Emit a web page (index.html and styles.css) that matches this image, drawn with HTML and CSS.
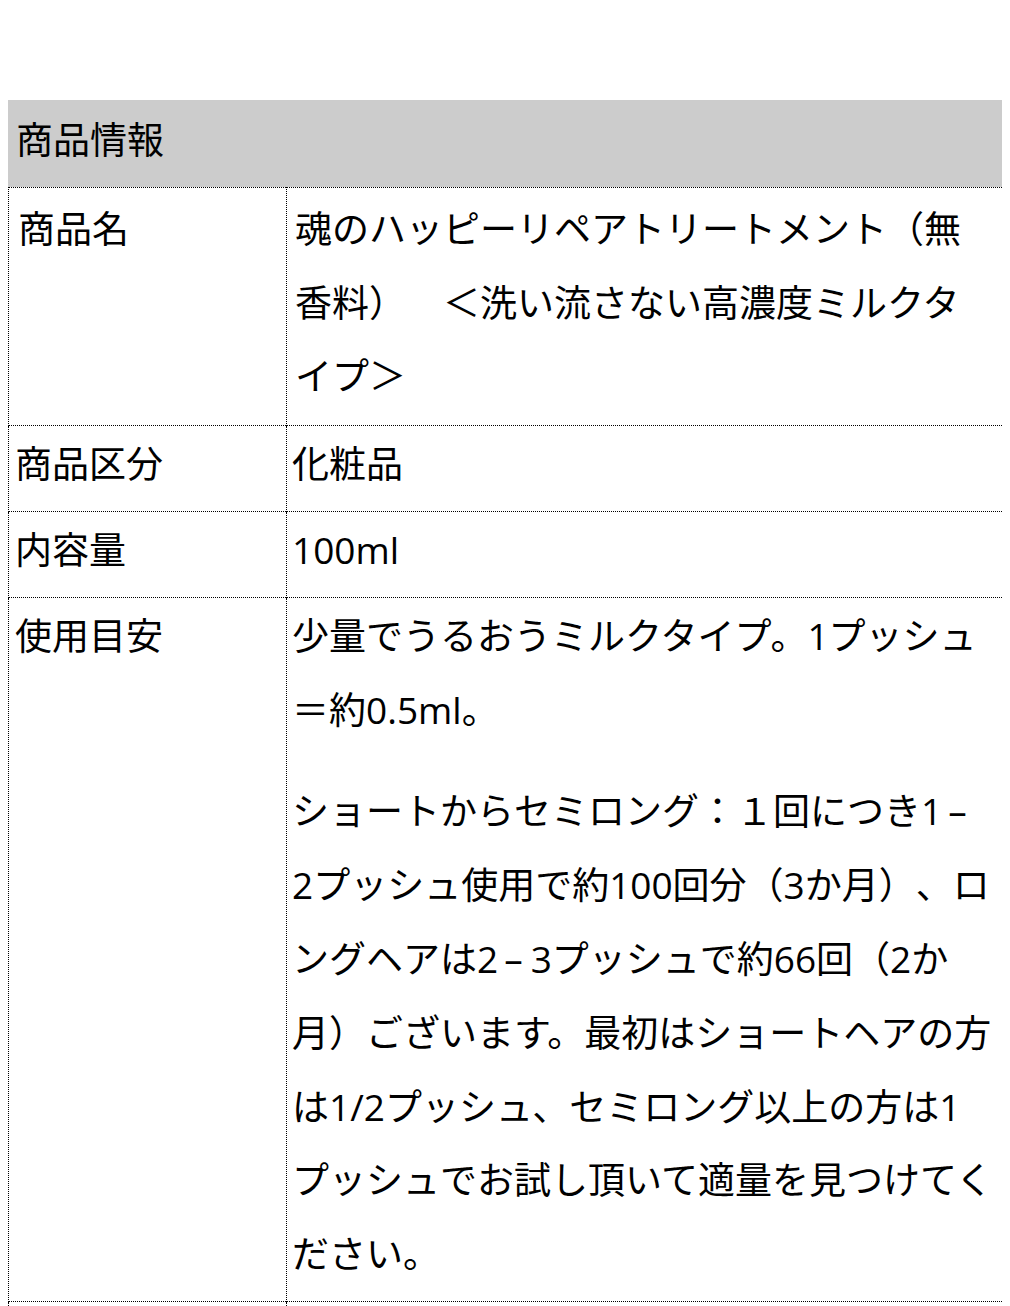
FILE: index.html
```
<!DOCTYPE html>
<html lang="ja">
<head>
<meta charset="utf-8">
<title>商品情報</title>
<link rel="stylesheet" href="styles.css">
</head>
<body>
<table class="spec">
  <colgroup>
    <col class="spec__label-col">
    <col class="spec__value-col">
  </colgroup>
  <thead>
    <tr>
      <th class="spec__title" colspan="2">商品情報</th>
    </tr>
  </thead>
  <tbody>
    <tr class="spec__row spec__row--roomy">
      <th class="spec__label">商品名</th>
      <td class="spec__value">魂のハッピーリペアトリートメント（無香料）　＜洗い流さない高濃度ミルクタイプ＞</td>
    </tr>
    <tr class="spec__row">
      <th class="spec__label">商品区分</th>
      <td class="spec__value">化粧品</td>
    </tr>
    <tr class="spec__row">
      <th class="spec__label">内容量</th>
      <td class="spec__value">100ml</td>
    </tr>
    <tr class="spec__row">
      <th class="spec__label">使用目安</th>
      <td class="spec__value">
        <p class="spec__note">少量でうるおうミルクタイプ。1プッシュ＝約0.5ml。</p>
        <p class="spec__note">ショートからセミロング：１回につき1<span class="spec__dash">–</span><br>2プッシュ使用で約100回分（3か月）、ロ<br>ングヘアは2<span class="spec__dash">–</span>3プッシュで約66回（2か<br>月）ございます。最初はショートヘアの方<br>は1/2プッシュ、セミロング以上の方は1<br>プッシュでお試し頂いて適量を見つけてく<br>ださい。</p>
      </td>
    </tr>
    <tr class="spec__row spec__row--more">
      <th class="spec__label"></th>
      <td class="spec__value"></td>
    </tr>
  </tbody>
</table>
</body>
</html>
```
FILE: styles.css
```
body {
  margin: 8px;
  font-family: "Open Sans", "Noto Sans CJK JP", sans-serif;
  color: #000;
  background: #fff;
}

.spec {
  width: 996px;
  margin-top: 92px;
  border-collapse: separate;
  border-spacing: 0;
  table-layout: fixed;
  font-size: 37px;
  line-height: 73.8px;
  text-spacing-trim: space-all;
}

.spec__label-col {
  width: 278px;
}

.spec__title {
  background: #ccc;
  font-weight: normal;
  text-align: left;
  padding: 3px 8px 10px;
}

.spec__label,
.spec__value {
  box-sizing: border-box;
  vertical-align: top;
  text-align: left;
  font-weight: normal;
  border-left: 1px dotted #000;
  border-bottom: 1px dotted #000;
}

.spec__label {
  padding: 1px 6px 10px;
}

.spec__value {
  padding: 1px 5px 10px 5px;
  border-right: 1px dotted #000;
}

.spec tbody tr:first-child > * {
  border-top: 1px dotted #000;
}

.spec__row--roomy > .spec__label {
  padding: 4px 9px 12px 9px;
}

.spec__row--roomy > .spec__value {
  padding: 4px 9px 12px 8px;
}

.spec__note {
  margin: 0;
}

.spec__note + .spec__note {
  margin-top: 28px;
}

.spec__dash {
  display: inline-block;
  padding: 0 8px 0 6px;
}

.spec__row--more > * {
  height: 80px;
}
```
